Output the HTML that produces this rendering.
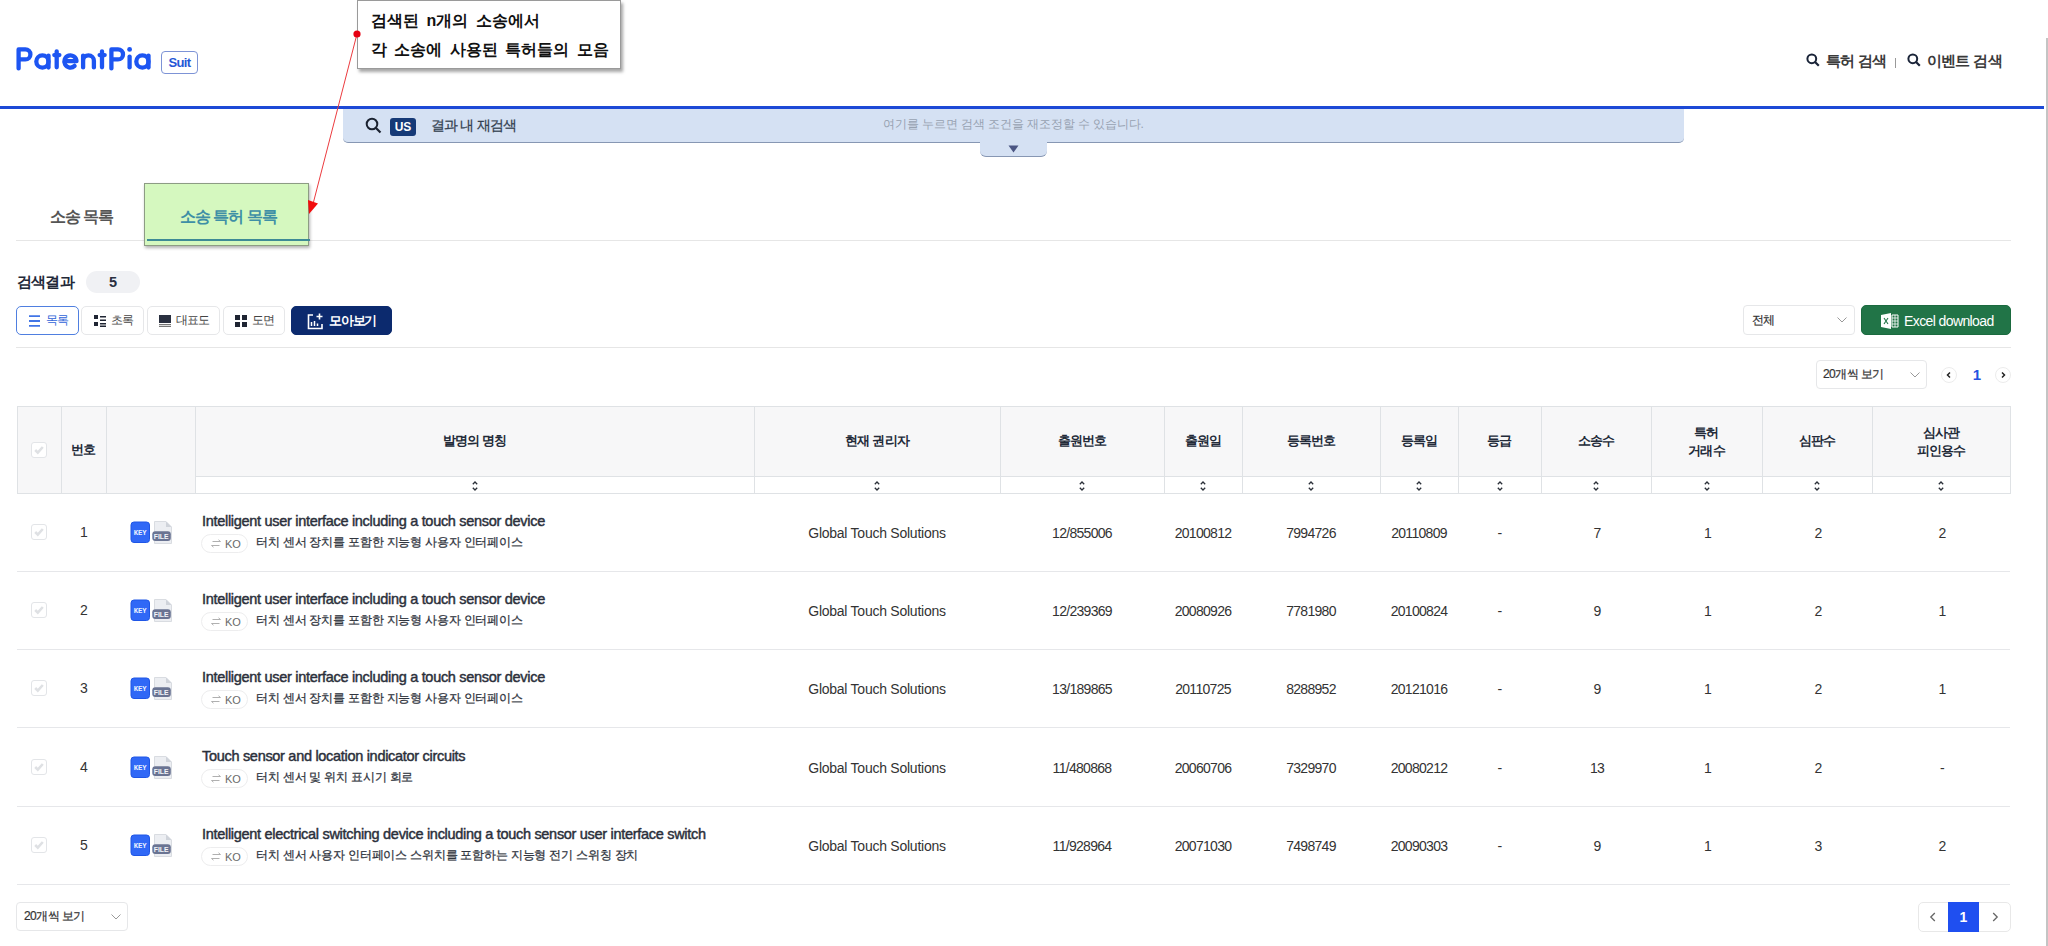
<!DOCTYPE html>
<html><head><meta charset="utf-8">
<style>
*{box-sizing:border-box;margin:0;padding:0}
html,body{width:2048px;height:946px;overflow:hidden;background:#fff}
body{position:relative;font-family:"Liberation Sans",sans-serif;color:#333}
.a{position:absolute}
.logo{left:14px;top:40px;font-size:33px;font-weight:bold;color:#1f55e0;letter-spacing:-1.6px;line-height:40px}
.suit{left:161px;top:51px;width:37px;height:23px;border:1px solid #7d93d6;border-radius:4px;color:#2556d6;font-size:13px;letter-spacing:-0.6px;line-height:22px;text-align:center;font-weight:bold}
.hnav{top:50px;font-size:15px;letter-spacing:-0.6px;font-weight:bold;color:#3a3a3a;line-height:22px;white-space:nowrap}
.blueline{left:0;top:106px;width:2044px;height:3px;background:#1c49d6}
.scroll{left:2046px;top:38px;width:2px;height:908px;background:#c4c4c4}
.sbar{left:343px;top:109px;width:1341px;height:34px;background:#d5e1f3;border-bottom:1px solid #8797b3;border-radius:0 0 5px 5px}
.stab{left:980px;top:141px;width:67px;height:16px;background:#d5e1f3;border-bottom:1px solid #8797b3;border-radius:0 0 6px 6px}
.us{left:390px;top:118px;width:26px;height:18px;background:#163a77;border-radius:3px;color:#fff;font-size:12px;font-weight:bold;text-align:center;line-height:18px}
.tip{left:357px;top:0px;width:264px;height:69px;background:#fff;border:1px solid #9a9a9a;box-shadow:2px 3px 3px rgba(0,0,0,.35)}
.tipt{left:371px;font-size:16px;letter-spacing:0px;word-spacing:3px;font-weight:bold;color:#111;line-height:20px;white-space:nowrap}
.tab1{left:50px;top:206px;font-size:16px;letter-spacing:-1px;font-weight:bold;color:#555;line-height:22px;white-space:nowrap}
.gbox{left:144px;top:183px;width:165px;height:63px;background:#d5f8bf;border:1px solid #8d9c84;box-shadow:1px 2px 3px rgba(0,0,0,.3)}
.tab2{left:180px;top:205.5px;font-size:16px;letter-spacing:-1px;font-weight:bold;color:#3e8fa6;line-height:22px;white-space:nowrap}
.tabline{left:16px;top:240px;width:1995px;height:1px;background:#e6e6e6}
.res{left:17px;top:271px;font-size:15px;letter-spacing:-0.8px;font-weight:bold;color:#222838;line-height:22px}
.pill{left:86px;top:271px;width:54px;height:22px;border-radius:11px;background:#f0f1f4;font-size:14.5px;font-weight:bold;color:#2a3040;text-align:center;line-height:22px}
.btn{top:305.5px;height:29.5px;border:1px solid #e6e7e9;border-radius:5px;font-size:12px;letter-spacing:-0.8px;color:#444;line-height:26px;white-space:nowrap}
.hline{left:16px;top:347px;width:1995px;height:1px;background:#e6e6e6}
.sel{border:1px solid #e6e7e9;border-radius:4px;font-size:13px;color:#333;-webkit-text-stroke:0.2px #333;white-space:nowrap}
.th{position:absolute;background:#f7f7f8;border-color:#dfe2e5;border-style:solid;border-width:0}
.tht{position:absolute;font-size:13px;letter-spacing:-0.8px;font-weight:bold;color:#222a38;text-align:center;line-height:18px}
.sort{position:absolute;top:481px;width:6px;height:10px}
.sort svg{display:block}
.rline{position:absolute;left:17px;width:1993px;height:1px;background:#e6e7ea}
.cb{position:absolute;left:31px;width:16px;height:16px;border:1px solid #e3e5e8;border-radius:3px;background:#fff}
.num{position:absolute;font-size:14px;letter-spacing:-0.7px;color:#333;text-align:center;line-height:18px;white-space:nowrap}
.ttl{position:absolute;left:202px;font-size:14.5px;font-weight:normal;color:#2b303b;-webkit-text-stroke:0.45px #2b303b;line-height:18px;white-space:nowrap;letter-spacing:-0.3px}
.ko{position:absolute;left:201px;width:47px;height:19px;border:1px solid #ededee;border-radius:10px;font-size:11px;color:#6a6a6a;line-height:17px;white-space:nowrap}
.kot{position:absolute;left:256px;font-size:12px;letter-spacing:-0.2px;color:#2f343d;-webkit-text-stroke:0.25px #2f343d;line-height:18px;white-space:nowrap}
</style></head><body>
<!-- header -->
<svg class="a" style="left:0;top:0" width="160" height="80" viewBox="0 0 160 80"><g fill="none" stroke="#1d55f2" stroke-width="4.3" stroke-linecap="round" stroke-linejoin="round">
<path d="M18.6 68.4V49.4H25.4A5 5 0 0 1 25.4 59.4H18.6"/>
<circle cx="42.4" cy="61.5" r="6.1"/><path d="M48.5 55.6V67.5"/>
<path d="M56.7 51.3V67.3M54.3 55.1H59.4"/>
<path d="M64.5 61.2H76.5A6.1 6.1 0 1 0 74.6 65.9"/>
<path d="M83.1 55.6V67.4M83.1 60.8A5.4 5.4 0 0 1 93.9 60.8V67.4"/>
<path d="M102 51.3V67.3M99.6 55.1H104.7"/>
<path d="M111.4 68.4V49.4H118A5 5 0 0 1 118 59.4H111.4"/>
<path d="M129.6 56.6V67.4"/>
<circle cx="142.4" cy="61.5" r="6.1"/><path d="M148.5 55.6V67.5"/>
</g><circle cx="129.6" cy="49.4" r="2.4" fill="#1d55f2"/></svg>
<div class="a suit">Suit</div>
<div class="a hnav" style="left:1806px">
<svg width="14" height="14" viewBox="0 0 14 14" style="vertical-align:-1px;margin-right:2px"><circle cx="5.8" cy="5.8" r="4.4" fill="none" stroke="#1a2438" stroke-width="2"/><path d="M9 9l3.8 3.8" stroke="#1a2438" stroke-width="2.2"/></svg> 특허 검색</div>
<div class="a" style="left:1895px;top:58px;width:1px;height:10px;background:#999"></div>
<div class="a hnav" style="left:1907px">
<svg width="14" height="14" viewBox="0 0 14 14" style="vertical-align:-1px;margin-right:2px"><circle cx="5.8" cy="5.8" r="4.4" fill="none" stroke="#1a2438" stroke-width="2"/><path d="M9 9l3.8 3.8" stroke="#1a2438" stroke-width="2.2"/></svg> 이벤트 검색</div>
<div class="a blueline"></div>
<div class="a scroll"></div>

<!-- search bar -->
<div class="a sbar"></div>
<div class="a stab"></div>
<svg class="a" style="left:365px;top:117px" width="17" height="17" viewBox="0 0 17 17"><circle cx="7" cy="7" r="5.3" fill="none" stroke="#1b2230" stroke-width="2"/><path d="M11 11l4.5 4.5" stroke="#1b2230" stroke-width="2.2"/></svg>
<div class="a us">US</div>
<div class="a" style="left:431px;top:115px;font-size:14px;letter-spacing:-0.8px;color:#33404f;-webkit-text-stroke:0.25px #33404f;line-height:20px;white-space:nowrap">결과 내 재검색</div>
<div class="a" style="left:883px;top:113.5px;font-size:12px;letter-spacing:-0.1px;color:#97a1b1;line-height:20px;white-space:nowrap">여기를 누르면 검색 조건을 재조정할 수 있습니다.</div>
<svg class="a" style="left:1008px;top:145px" width="11" height="8" viewBox="0 0 11 8"><path d="M0.5 0.5h10L5.5 7.5z" fill="#4b5683"/></svg>

<!-- tabs -->
<div class="a tab1">소송 목록</div>
<div class="a tabline"></div>
<div class="a gbox"></div>
<div class="a tab2">소송 특허 목록</div>
<div class="a" style="left:147px;top:239px;width:163px;height:2px;background:#3d8a95"></div>

<!-- tooltip -->
<div class="a tip"></div>
<div class="a tipt" style="top:11px">검색된 n개의 소송에서</div>
<div class="a tipt" style="top:40px">각 소송에 사용된 특허들의 모음</div>
<svg class="a" style="left:0;top:0" width="400" height="260" viewBox="0 0 400 260">
<line x1="357" y1="34" x2="313" y2="204" stroke="#ec3b3f" stroke-width="1"/>
<path d="M308 200 L318 203.5 L309 214 Z" fill="#f20d0d"/>
<circle cx="357" cy="34" r="3.6" fill="#e60012"/>
</svg>

<!-- results -->
<div class="a res">검색결과</div>
<div class="a pill">5</div>
<div class="a btn" style="left:16px;width:63px;border-color:#4f7fe0;color:#2f63d8">
<svg width="12" height="12" viewBox="0 0 12 12" style="position:absolute;left:12px;top:8px"><path d="M0 1.2h11M0 6h11M0 10.8h11" stroke="#4275e6" stroke-width="1.8"/></svg>
<span style="position:absolute;left:29px;top:0">목록</span></div>
<div class="a btn" style="left:81px;width:63px">
<svg width="12" height="12" viewBox="0 0 12 12" style="position:absolute;left:12px;top:8px"><path d="M0 0h4v4H0zM0 7h4v4H0zM6 1h6v1.5H6zM6 4.5h6V6H6zM6 8h6v1.5H6zM6 10.5h6V12H6z" fill="#1f2533"/></svg>
<span style="position:absolute;left:29px;top:0">초록</span></div>
<div class="a btn" style="left:147px;width:73px">
<svg width="12" height="12" viewBox="0 0 12 12" style="position:absolute;left:11px;top:8px"><path d="M0 0h12v8H0z" fill="#2a3040"/><path d="M0 9h12v1.3H0z M0 11h12v1H0z" fill="#777"/></svg>
<span style="position:absolute;left:28px;top:0">대표도</span></div>
<div class="a btn" style="left:223px;width:62px">
<svg width="12" height="12" viewBox="0 0 12 12" style="position:absolute;left:11px;top:8px"><path d="M0 0h5v5H0zM7 0h5v5H7zM0 7h5v5H0zM7 7h5v5H7z" fill="#1f2533"/></svg>
<span style="position:absolute;left:28px;top:0">도면</span></div>
<div class="a btn" style="left:291px;width:101px;background:#0c2a6e;border-color:#0c2a6e;color:#fff;font-size:14px">
<svg width="17" height="17" viewBox="0 0 17 17" style="position:absolute;left:15px;top:6px"><path d="M6 2H1.5v13.5h13.5V11" fill="none" stroke="#fff" stroke-width="1.6"/><path d="M12.5 0.5v6M9.5 3.5h6" stroke="#fff" stroke-width="1.6"/><path d="M4.5 9v4M7.5 8v5M10.5 10.5v2.5" stroke="#fff" stroke-width="1.5"/></svg>
<span style="position:absolute;left:37px;top:1.5px;font-size:13px;font-weight:bold;letter-spacing:-1.2px">모아보기</span></div>

<div class="a sel" style="left:1743px;top:305px;width:112px;height:30px;line-height:28px;padding-left:8px;font-size:11.5px;letter-spacing:-0.8px">전체
<svg width="10" height="6" viewBox="0 0 10 6" style="position:absolute;left:93px;top:11px"><path d="M0.5 0.5L5 5L9.5 0.5" fill="none" stroke="#999" stroke-width="1"/></svg></div>
<div class="a" style="left:1861px;top:305px;width:150px;height:30px;background:#217447;border:1px solid #1b6a3f;border-radius:5px;color:#fff;font-size:14px;line-height:30px;white-space:nowrap">
<svg width="18" height="16" viewBox="0 0 18 16" style="position:absolute;left:19px;top:7px"><path d="M0 2L10 0V16L0 14Z" fill="#fff"/><path d="M11 2h6v12h-6z" fill="none" stroke="#fff" stroke-width="1"/><path d="M11 5h6M11 8h6M11 11h6M14 2v12" stroke="#fff" stroke-width="0.8"/><path d="M3 5l4 6M7 5l-4 6" stroke="#217447" stroke-width="1.1"/></svg>
<span style="position:absolute;left:42px;top:-0.5px;font-size:14px;letter-spacing:-0.6px">Excel download</span></div>
<div class="a hline"></div>

<div class="a sel" style="left:1816px;top:360px;width:111px;height:29px;line-height:27px;padding-left:6px;font-size:12px;letter-spacing:-0.6px">20개씩 보기
<svg width="10" height="6" viewBox="0 0 10 6" style="position:absolute;left:93px;top:11px"><path d="M0.5 0.5L5 5L9.5 0.5" fill="none" stroke="#999" stroke-width="1"/></svg></div>
<div class="a" style="left:1941px;top:367px;width:16px;height:16px;border:1px solid #ececec;border-radius:50%"><svg width="14" height="14" viewBox="0 0 14 14" style="position:absolute;left:0;top:0"><path d="M8 4.5L5.5 7L8 9.5" fill="none" stroke="#222" stroke-width="1.5"/></svg></div>
<div class="a" style="left:1970px;top:365px;width:14px;font-size:15px;font-weight:bold;color:#2452e0;line-height:20px;text-align:center">1</div>
<div class="a" style="left:1995px;top:367px;width:16px;height:16px;border:1px solid #ececec;border-radius:50%"><svg width="14" height="14" viewBox="0 0 14 14" style="position:absolute;left:0;top:0"><path d="M6 4.5L8.5 7L6 9.5" fill="none" stroke="#222" stroke-width="1.5"/></svg></div>

<!-- TABLE -->
<div class="th" style="left:17px;top:406px;width:1993px;height:88px;border-width:1px 0 1px 1px"></div>
<div class="a" style="left:195px;top:476px;width:1815px;height:17px;background:#fff;border-top:1px solid #dfe2e5"></div>
<div class="a" style="left:61px;top:406px;width:1px;height:88px;background:#dfe2e5"></div>
<div class="a" style="left:106px;top:406px;width:1px;height:88px;background:#dfe2e5"></div>
<div class="a" style="left:195px;top:406px;width:1px;height:88px;background:#dfe2e5"></div>
<div class="a" style="left:754px;top:406px;width:1px;height:88px;background:#dfe2e5"></div>
<div class="a" style="left:1000px;top:406px;width:1px;height:88px;background:#dfe2e5"></div>
<div class="a" style="left:1164px;top:406px;width:1px;height:88px;background:#dfe2e5"></div>
<div class="a" style="left:1242px;top:406px;width:1px;height:88px;background:#dfe2e5"></div>
<div class="a" style="left:1380px;top:406px;width:1px;height:88px;background:#dfe2e5"></div>
<div class="a" style="left:1458px;top:406px;width:1px;height:88px;background:#dfe2e5"></div>
<div class="a" style="left:1541px;top:406px;width:1px;height:88px;background:#dfe2e5"></div>
<div class="a" style="left:1651px;top:406px;width:1px;height:88px;background:#dfe2e5"></div>
<div class="a" style="left:1762px;top:406px;width:1px;height:88px;background:#dfe2e5"></div>
<div class="a" style="left:1872px;top:406px;width:1px;height:88px;background:#dfe2e5"></div>
<div class="a" style="left:2010px;top:406px;width:1px;height:88px;background:#dfe2e5"></div>
<div class="cb" style="top:442px"><svg width="14" height="14" viewBox="0 0 14 14" style="position:absolute;left:0;top:0"><path d="M3.2 7l2.6 2.6L10.8 4" fill="none" stroke="#dfe1e4" stroke-width="2.6"/></svg></div>
<div class="tht" style="left:23.5px;width:120px;top:440.5px">번호</div>
<div class="tht" style="left:414.5px;width:120px;top:432px">발명의 명칭</div>
<div class="tht" style="left:817.0px;width:120px;top:432px">현재 권리자</div>
<div class="tht" style="left:1022.0px;width:120px;top:432px">출원번호</div>
<div class="tht" style="left:1143.0px;width:120px;top:432px">출원일</div>
<div class="tht" style="left:1251.0px;width:120px;top:432px">등록번호</div>
<div class="tht" style="left:1359.0px;width:120px;top:432px">등록일</div>
<div class="tht" style="left:1439.5px;width:120px;top:432px">등급</div>
<div class="tht" style="left:1536.0px;width:120px;top:432px">소송수</div>
<div class="tht" style="left:1646.5px;width:120px;top:424px">특허<br>거래수</div>
<div class="tht" style="left:1757.0px;width:120px;top:432px">심판수</div>
<div class="tht" style="left:1881.0px;width:120px;top:424px">심사관<br>피인용수</div>
<div class="sort" style="left:471.5px"><svg width="6" height="10" viewBox="0 0 6 10"><path d="M0.8 3.2L3 1L5.2 3.2M0.8 6.8L3 9L5.2 6.8" fill="none" stroke="#2a2f38" stroke-width="1.3"/></svg></div>
<div class="sort" style="left:874.0px"><svg width="6" height="10" viewBox="0 0 6 10"><path d="M0.8 3.2L3 1L5.2 3.2M0.8 6.8L3 9L5.2 6.8" fill="none" stroke="#2a2f38" stroke-width="1.3"/></svg></div>
<div class="sort" style="left:1079.0px"><svg width="6" height="10" viewBox="0 0 6 10"><path d="M0.8 3.2L3 1L5.2 3.2M0.8 6.8L3 9L5.2 6.8" fill="none" stroke="#2a2f38" stroke-width="1.3"/></svg></div>
<div class="sort" style="left:1200.0px"><svg width="6" height="10" viewBox="0 0 6 10"><path d="M0.8 3.2L3 1L5.2 3.2M0.8 6.8L3 9L5.2 6.8" fill="none" stroke="#2a2f38" stroke-width="1.3"/></svg></div>
<div class="sort" style="left:1308.0px"><svg width="6" height="10" viewBox="0 0 6 10"><path d="M0.8 3.2L3 1L5.2 3.2M0.8 6.8L3 9L5.2 6.8" fill="none" stroke="#2a2f38" stroke-width="1.3"/></svg></div>
<div class="sort" style="left:1416.0px"><svg width="6" height="10" viewBox="0 0 6 10"><path d="M0.8 3.2L3 1L5.2 3.2M0.8 6.8L3 9L5.2 6.8" fill="none" stroke="#2a2f38" stroke-width="1.3"/></svg></div>
<div class="sort" style="left:1496.5px"><svg width="6" height="10" viewBox="0 0 6 10"><path d="M0.8 3.2L3 1L5.2 3.2M0.8 6.8L3 9L5.2 6.8" fill="none" stroke="#2a2f38" stroke-width="1.3"/></svg></div>
<div class="sort" style="left:1593.0px"><svg width="6" height="10" viewBox="0 0 6 10"><path d="M0.8 3.2L3 1L5.2 3.2M0.8 6.8L3 9L5.2 6.8" fill="none" stroke="#2a2f38" stroke-width="1.3"/></svg></div>
<div class="sort" style="left:1703.5px"><svg width="6" height="10" viewBox="0 0 6 10"><path d="M0.8 3.2L3 1L5.2 3.2M0.8 6.8L3 9L5.2 6.8" fill="none" stroke="#2a2f38" stroke-width="1.3"/></svg></div>
<div class="sort" style="left:1814.0px"><svg width="6" height="10" viewBox="0 0 6 10"><path d="M0.8 3.2L3 1L5.2 3.2M0.8 6.8L3 9L5.2 6.8" fill="none" stroke="#2a2f38" stroke-width="1.3"/></svg></div>
<div class="sort" style="left:1938.0px"><svg width="6" height="10" viewBox="0 0 6 10"><path d="M0.8 3.2L3 1L5.2 3.2M0.8 6.8L3 9L5.2 6.8" fill="none" stroke="#2a2f38" stroke-width="1.3"/></svg></div>
<div class="cb" style="top:524px"><svg width="14" height="14" viewBox="0 0 14 14" style="position:absolute;left:0;top:0"><path d="M3.2 7l2.6 2.6L10.8 4" fill="none" stroke="#dfe1e4" stroke-width="2.6"/></svg></div>
<div class="num" style="left:63.5px;width:40px;top:523px">1</div>
<div class="a" style="left:130px;top:521px"><svg width="20" height="22" viewBox="0 0 20 22" style="display:block"><rect x="1" y="1" width="18.5" height="20.5" rx="3" fill="#3068f6" stroke="#1f56e6" stroke-width="1"/><text x="10.2" y="14" font-family="Liberation Mono" font-size="7.5" font-weight="bold" fill="#eaf1ff" text-anchor="middle" textLength="13" lengthAdjust="spacingAndGlyphs">KEY</text></svg></div>
<div class="a" style="left:152px;top:521px"><svg width="21" height="23" viewBox="0 0 21 23" style="display:block"><path d="M2.5 0.5h11.5l5.5 5.5v16.5h-17z" fill="#eceef2" stroke="#d9dce1"/><path d="M14 0.5v5.5h5.5z" fill="#cfd3da"/><rect x="0.3" y="10.3" width="18.5" height="9.7" rx="3" fill="#6a7493"/><text x="9.2" y="18.2" font-family="Liberation Sans" font-size="7.5" font-weight="bold" fill="#f3f5fa" text-anchor="middle" textLength="14.8" lengthAdjust="spacingAndGlyphs">FILE</text></svg></div>
<div class="ttl" style="top:512px">Intelligent user interface including a touch sensor device</div>
<div class="ko" style="top:534px"><svg width="12" height="9" viewBox="0 0 12 9" style="position:absolute;left:8px;top:4px"><path d="M2.5 2.5h8M8.5 0.8L10.5 2.5M9.5 6.5H1.5M3.5 8.2L1.5 6.5" fill="none" stroke="#b0b0b0" stroke-width="1"/></svg><span style="position:absolute;left:23px;top:0.5px">KO</span></div>
<div class="kot" style="top:533px">터치 센서 장치를 포함한 지능형 사용자 인터페이스</div>
<div class="num" style="left:777.0px;width:200px;top:524px;letter-spacing:-0.25px">Global Touch Solutions</div>
<div class="num" style="left:1032.0px;width:100px;top:524px">12/855006</div>
<div class="num" style="left:1153.0px;width:100px;top:524px">20100812</div>
<div class="num" style="left:1261.0px;width:100px;top:524px">7994726</div>
<div class="num" style="left:1369.0px;width:100px;top:524px">20110809</div>
<div class="num" style="left:1449.5px;width:100px;top:524px">-</div>
<div class="num" style="left:1547.0px;width:100px;top:524px">7</div>
<div class="num" style="left:1657.5px;width:100px;top:524px">1</div>
<div class="num" style="left:1768.0px;width:100px;top:524px">2</div>
<div class="num" style="left:1892.0px;width:100px;top:524px">2</div>
<div class="rline" style="top:571px"></div>
<div class="cb" style="top:602px"><svg width="14" height="14" viewBox="0 0 14 14" style="position:absolute;left:0;top:0"><path d="M3.2 7l2.6 2.6L10.8 4" fill="none" stroke="#dfe1e4" stroke-width="2.6"/></svg></div>
<div class="num" style="left:63.5px;width:40px;top:601px">2</div>
<div class="a" style="left:130px;top:599px"><svg width="20" height="22" viewBox="0 0 20 22" style="display:block"><rect x="1" y="1" width="18.5" height="20.5" rx="3" fill="#3068f6" stroke="#1f56e6" stroke-width="1"/><text x="10.2" y="14" font-family="Liberation Mono" font-size="7.5" font-weight="bold" fill="#eaf1ff" text-anchor="middle" textLength="13" lengthAdjust="spacingAndGlyphs">KEY</text></svg></div>
<div class="a" style="left:152px;top:599px"><svg width="21" height="23" viewBox="0 0 21 23" style="display:block"><path d="M2.5 0.5h11.5l5.5 5.5v16.5h-17z" fill="#eceef2" stroke="#d9dce1"/><path d="M14 0.5v5.5h5.5z" fill="#cfd3da"/><rect x="0.3" y="10.3" width="18.5" height="9.7" rx="3" fill="#6a7493"/><text x="9.2" y="18.2" font-family="Liberation Sans" font-size="7.5" font-weight="bold" fill="#f3f5fa" text-anchor="middle" textLength="14.8" lengthAdjust="spacingAndGlyphs">FILE</text></svg></div>
<div class="ttl" style="top:590px">Intelligent user interface including a touch sensor device</div>
<div class="ko" style="top:612px"><svg width="12" height="9" viewBox="0 0 12 9" style="position:absolute;left:8px;top:4px"><path d="M2.5 2.5h8M8.5 0.8L10.5 2.5M9.5 6.5H1.5M3.5 8.2L1.5 6.5" fill="none" stroke="#b0b0b0" stroke-width="1"/></svg><span style="position:absolute;left:23px;top:0.5px">KO</span></div>
<div class="kot" style="top:611px">터치 센서 장치를 포함한 지능형 사용자 인터페이스</div>
<div class="num" style="left:777.0px;width:200px;top:602px;letter-spacing:-0.25px">Global Touch Solutions</div>
<div class="num" style="left:1032.0px;width:100px;top:602px">12/239369</div>
<div class="num" style="left:1153.0px;width:100px;top:602px">20080926</div>
<div class="num" style="left:1261.0px;width:100px;top:602px">7781980</div>
<div class="num" style="left:1369.0px;width:100px;top:602px">20100824</div>
<div class="num" style="left:1449.5px;width:100px;top:602px">-</div>
<div class="num" style="left:1547.0px;width:100px;top:602px">9</div>
<div class="num" style="left:1657.5px;width:100px;top:602px">1</div>
<div class="num" style="left:1768.0px;width:100px;top:602px">2</div>
<div class="num" style="left:1892.0px;width:100px;top:602px">1</div>
<div class="rline" style="top:649px"></div>
<div class="cb" style="top:680px"><svg width="14" height="14" viewBox="0 0 14 14" style="position:absolute;left:0;top:0"><path d="M3.2 7l2.6 2.6L10.8 4" fill="none" stroke="#dfe1e4" stroke-width="2.6"/></svg></div>
<div class="num" style="left:63.5px;width:40px;top:679px">3</div>
<div class="a" style="left:130px;top:677px"><svg width="20" height="22" viewBox="0 0 20 22" style="display:block"><rect x="1" y="1" width="18.5" height="20.5" rx="3" fill="#3068f6" stroke="#1f56e6" stroke-width="1"/><text x="10.2" y="14" font-family="Liberation Mono" font-size="7.5" font-weight="bold" fill="#eaf1ff" text-anchor="middle" textLength="13" lengthAdjust="spacingAndGlyphs">KEY</text></svg></div>
<div class="a" style="left:152px;top:677px"><svg width="21" height="23" viewBox="0 0 21 23" style="display:block"><path d="M2.5 0.5h11.5l5.5 5.5v16.5h-17z" fill="#eceef2" stroke="#d9dce1"/><path d="M14 0.5v5.5h5.5z" fill="#cfd3da"/><rect x="0.3" y="10.3" width="18.5" height="9.7" rx="3" fill="#6a7493"/><text x="9.2" y="18.2" font-family="Liberation Sans" font-size="7.5" font-weight="bold" fill="#f3f5fa" text-anchor="middle" textLength="14.8" lengthAdjust="spacingAndGlyphs">FILE</text></svg></div>
<div class="ttl" style="top:668px">Intelligent user interface including a touch sensor device</div>
<div class="ko" style="top:690px"><svg width="12" height="9" viewBox="0 0 12 9" style="position:absolute;left:8px;top:4px"><path d="M2.5 2.5h8M8.5 0.8L10.5 2.5M9.5 6.5H1.5M3.5 8.2L1.5 6.5" fill="none" stroke="#b0b0b0" stroke-width="1"/></svg><span style="position:absolute;left:23px;top:0.5px">KO</span></div>
<div class="kot" style="top:689px">터치 센서 장치를 포함한 지능형 사용자 인터페이스</div>
<div class="num" style="left:777.0px;width:200px;top:680px;letter-spacing:-0.25px">Global Touch Solutions</div>
<div class="num" style="left:1032.0px;width:100px;top:680px">13/189865</div>
<div class="num" style="left:1153.0px;width:100px;top:680px">20110725</div>
<div class="num" style="left:1261.0px;width:100px;top:680px">8288952</div>
<div class="num" style="left:1369.0px;width:100px;top:680px">20121016</div>
<div class="num" style="left:1449.5px;width:100px;top:680px">-</div>
<div class="num" style="left:1547.0px;width:100px;top:680px">9</div>
<div class="num" style="left:1657.5px;width:100px;top:680px">1</div>
<div class="num" style="left:1768.0px;width:100px;top:680px">2</div>
<div class="num" style="left:1892.0px;width:100px;top:680px">1</div>
<div class="rline" style="top:727px"></div>
<div class="cb" style="top:759px"><svg width="14" height="14" viewBox="0 0 14 14" style="position:absolute;left:0;top:0"><path d="M3.2 7l2.6 2.6L10.8 4" fill="none" stroke="#dfe1e4" stroke-width="2.6"/></svg></div>
<div class="num" style="left:63.5px;width:40px;top:758px">4</div>
<div class="a" style="left:130px;top:756px"><svg width="20" height="22" viewBox="0 0 20 22" style="display:block"><rect x="1" y="1" width="18.5" height="20.5" rx="3" fill="#3068f6" stroke="#1f56e6" stroke-width="1"/><text x="10.2" y="14" font-family="Liberation Mono" font-size="7.5" font-weight="bold" fill="#eaf1ff" text-anchor="middle" textLength="13" lengthAdjust="spacingAndGlyphs">KEY</text></svg></div>
<div class="a" style="left:152px;top:756px"><svg width="21" height="23" viewBox="0 0 21 23" style="display:block"><path d="M2.5 0.5h11.5l5.5 5.5v16.5h-17z" fill="#eceef2" stroke="#d9dce1"/><path d="M14 0.5v5.5h5.5z" fill="#cfd3da"/><rect x="0.3" y="10.3" width="18.5" height="9.7" rx="3" fill="#6a7493"/><text x="9.2" y="18.2" font-family="Liberation Sans" font-size="7.5" font-weight="bold" fill="#f3f5fa" text-anchor="middle" textLength="14.8" lengthAdjust="spacingAndGlyphs">FILE</text></svg></div>
<div class="ttl" style="top:747px">Touch sensor and location indicator circuits</div>
<div class="ko" style="top:769px"><svg width="12" height="9" viewBox="0 0 12 9" style="position:absolute;left:8px;top:4px"><path d="M2.5 2.5h8M8.5 0.8L10.5 2.5M9.5 6.5H1.5M3.5 8.2L1.5 6.5" fill="none" stroke="#b0b0b0" stroke-width="1"/></svg><span style="position:absolute;left:23px;top:0.5px">KO</span></div>
<div class="kot" style="top:768px">터치 센서 및 위치 표시기 회로</div>
<div class="num" style="left:777.0px;width:200px;top:759px;letter-spacing:-0.25px">Global Touch Solutions</div>
<div class="num" style="left:1032.0px;width:100px;top:759px">11/480868</div>
<div class="num" style="left:1153.0px;width:100px;top:759px">20060706</div>
<div class="num" style="left:1261.0px;width:100px;top:759px">7329970</div>
<div class="num" style="left:1369.0px;width:100px;top:759px">20080212</div>
<div class="num" style="left:1449.5px;width:100px;top:759px">-</div>
<div class="num" style="left:1547.0px;width:100px;top:759px">13</div>
<div class="num" style="left:1657.5px;width:100px;top:759px">1</div>
<div class="num" style="left:1768.0px;width:100px;top:759px">2</div>
<div class="num" style="left:1892.0px;width:100px;top:759px">-</div>
<div class="rline" style="top:806px"></div>
<div class="cb" style="top:837px"><svg width="14" height="14" viewBox="0 0 14 14" style="position:absolute;left:0;top:0"><path d="M3.2 7l2.6 2.6L10.8 4" fill="none" stroke="#dfe1e4" stroke-width="2.6"/></svg></div>
<div class="num" style="left:63.5px;width:40px;top:836px">5</div>
<div class="a" style="left:130px;top:834px"><svg width="20" height="22" viewBox="0 0 20 22" style="display:block"><rect x="1" y="1" width="18.5" height="20.5" rx="3" fill="#3068f6" stroke="#1f56e6" stroke-width="1"/><text x="10.2" y="14" font-family="Liberation Mono" font-size="7.5" font-weight="bold" fill="#eaf1ff" text-anchor="middle" textLength="13" lengthAdjust="spacingAndGlyphs">KEY</text></svg></div>
<div class="a" style="left:152px;top:834px"><svg width="21" height="23" viewBox="0 0 21 23" style="display:block"><path d="M2.5 0.5h11.5l5.5 5.5v16.5h-17z" fill="#eceef2" stroke="#d9dce1"/><path d="M14 0.5v5.5h5.5z" fill="#cfd3da"/><rect x="0.3" y="10.3" width="18.5" height="9.7" rx="3" fill="#6a7493"/><text x="9.2" y="18.2" font-family="Liberation Sans" font-size="7.5" font-weight="bold" fill="#f3f5fa" text-anchor="middle" textLength="14.8" lengthAdjust="spacingAndGlyphs">FILE</text></svg></div>
<div class="ttl" style="top:825px">Intelligent electrical switching device including a touch sensor user interface switch</div>
<div class="ko" style="top:847px"><svg width="12" height="9" viewBox="0 0 12 9" style="position:absolute;left:8px;top:4px"><path d="M2.5 2.5h8M8.5 0.8L10.5 2.5M9.5 6.5H1.5M3.5 8.2L1.5 6.5" fill="none" stroke="#b0b0b0" stroke-width="1"/></svg><span style="position:absolute;left:23px;top:0.5px">KO</span></div>
<div class="kot" style="top:846px">터치 센서 사용자 인터페이스 스위치를 포함하는 지능형 전기 스위칭 장치</div>
<div class="num" style="left:777.0px;width:200px;top:837px;letter-spacing:-0.25px">Global Touch Solutions</div>
<div class="num" style="left:1032.0px;width:100px;top:837px">11/928964</div>
<div class="num" style="left:1153.0px;width:100px;top:837px">20071030</div>
<div class="num" style="left:1261.0px;width:100px;top:837px">7498749</div>
<div class="num" style="left:1369.0px;width:100px;top:837px">20090303</div>
<div class="num" style="left:1449.5px;width:100px;top:837px">-</div>
<div class="num" style="left:1547.0px;width:100px;top:837px">9</div>
<div class="num" style="left:1657.5px;width:100px;top:837px">1</div>
<div class="num" style="left:1768.0px;width:100px;top:837px">3</div>
<div class="num" style="left:1892.0px;width:100px;top:837px">2</div>
<div class="rline" style="top:884px"></div>
<!-- bottom -->
<div class="a sel" style="left:16px;top:902px;width:112px;height:29px;line-height:27px;padding-left:7px;font-size:12px;letter-spacing:-0.6px">20개씩 보기
<svg width="10" height="6" viewBox="0 0 10 6" style="position:absolute;left:94px;top:11px"><path d="M0.5 0.5L5 5L9.5 0.5" fill="none" stroke="#999" stroke-width="1"/></svg></div>
<div class="a" style="left:1918px;top:902px;width:93px;height:30px;border:1px solid #e8e8e8;border-radius:5px"></div>
<div class="a" style="left:1948px;top:902px;width:31px;height:30px;background:#1f4ff0;color:#fff;font-size:14px;font-weight:bold;text-align:center;line-height:30px">1</div>
<svg class="a" style="left:1926px;top:910px" width="14" height="14" viewBox="0 0 14 14"><path d="M8.8 3L4.8 7L8.8 11" fill="none" stroke="#666" stroke-width="1.3"/></svg>
<svg class="a" style="left:1988px;top:910px" width="14" height="14" viewBox="0 0 14 14"><path d="M5.2 3L9.2 7L5.2 11" fill="none" stroke="#666" stroke-width="1.3"/></svg>
</body></html>
